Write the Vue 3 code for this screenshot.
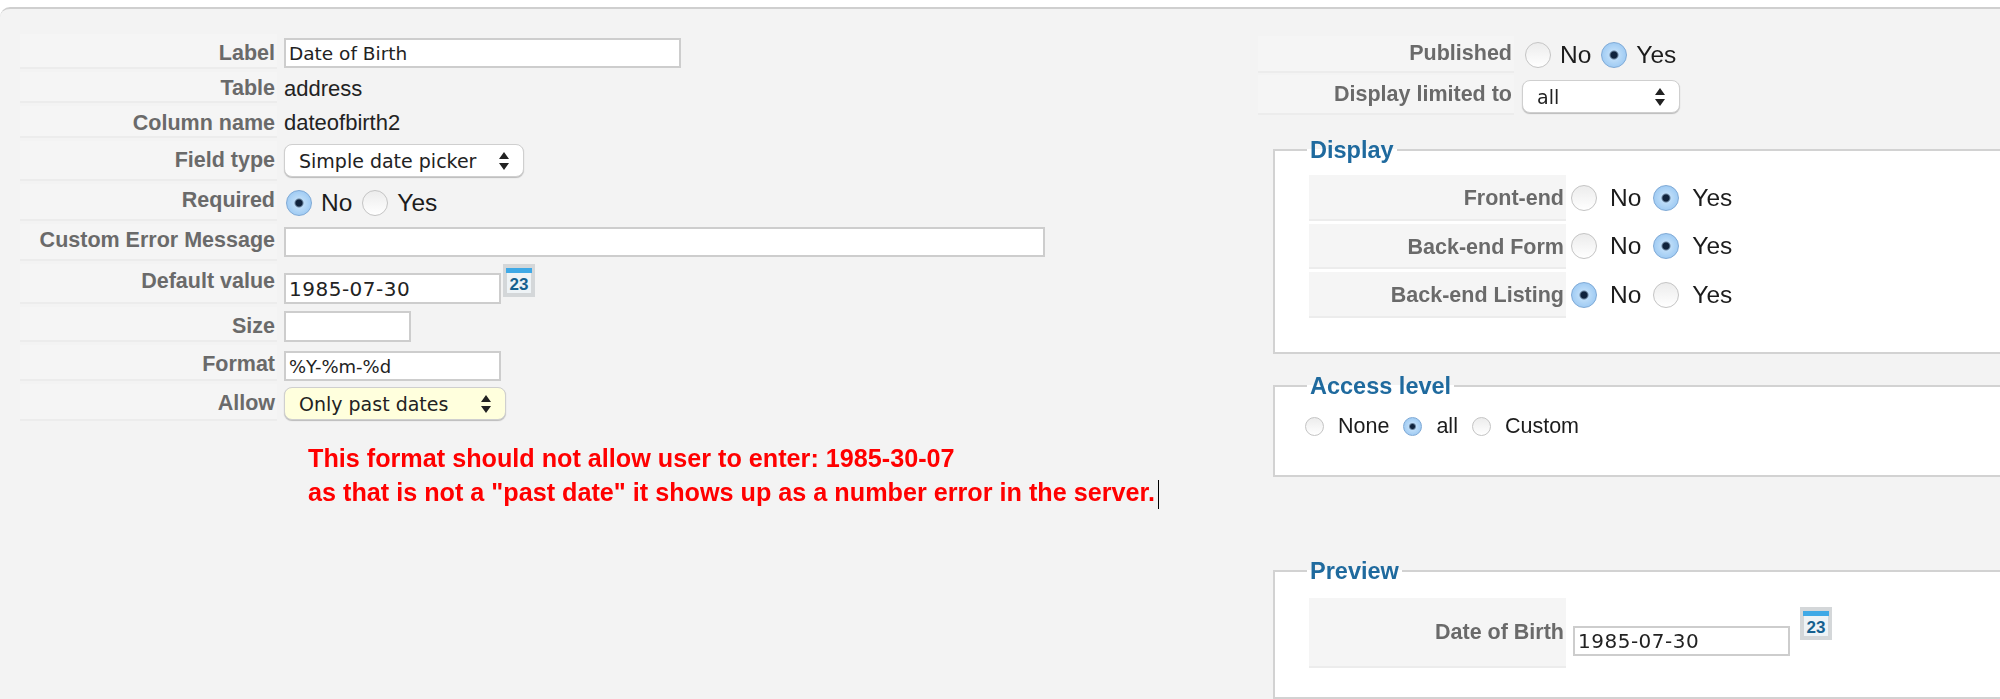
<script setup>
const cal = '23'
</script>

<template>
  <div class="page">
    <div class="card">
      <div class="col-left">
        <div class="row h35">
          <div class="lab pt7">Label</div>
          <input class="inp w397 first" value="Date of Birth" />
        </div>
        <div class="row h31">
          <div class="lab">Table</div>
          <div class="val">address</div>
        </div>
        <div class="row h32">
          <div class="lab pt5">Column name</div>
          <div class="val">dateofbirth2</div>
        </div>
        <div class="row h40">
          <div class="lab pt7">Field type</div>
          <div class="sel w240"><span>Simple date picker</span>
            <svg class="updown" width="12" height="20" viewBox="0 0 12 20"><path d="M6 1l5 7H1zM6 19l5-7H1z" fill="#222" /></svg>
          </div>
        </div>
        <div class="row h37">
          <div class="lab">Required</div>
          <div class="opts">
            <input type="radio" class="rad" name="req" checked /><span class="opt">No</span>
            <input type="radio" class="rad" name="req" /><span class="opt">Yes</span>
          </div>
        </div>
        <div class="row h37">
          <div class="lab">Custom Error Message</div>
          <input class="inp w761" />
        </div>
        <div class="row h40">
          <div class="lab pt5">Default value</div>
          <input class="inp w217 low date" value="1985-07-30" />
          <svg class="calendar" width="32" height="33" viewBox="0 0 32 33">
            <rect width="32" height="33" fill="#d4d7d9" />
            <rect x="4" y="4" width="24" height="25" fill="#eef3f6" />
            <rect x="3" y="4" width="26" height="5" fill="#3fa9e6" />
            <text x="16" y="26" text-anchor="middle" class="cal-num">{{ cal }}</text>
          </svg>
        </div>
        <div class="row h35">
          <div class="lab pt7">Size</div>
          <input class="inp w127 low" />
        </div>
        <div class="row h36">
          <div class="lab pt7">Format</div>
          <input class="inp w217 small" value="%Y-%m-%d" />
        </div>
        <div class="row h37">
          <div class="lab pt7">Allow</div>
          <div class="sel w222 yellow"><span>Only past dates</span>
            <svg class="updown" width="12" height="20" viewBox="0 0 12 20"><path d="M6 1l5 7H1zM6 19l5-7H1z" fill="#222" /></svg>
          </div>
        </div>
        <div class="note">
          This format should not allow user to enter: 1985-30-07<br />
          as that is not a "past date" it shows up as a number error in the server.<span class="caret"></span>
        </div>
      </div>

      <div class="col-right">
        <div class="row-r h37r">
          <div class="lab lab-r pt5">Published</div>
          <div class="opts top-opts">
            <input type="radio" class="rad" name="pub" /><span class="opt">No</span>
            <input type="radio" class="rad" name="pub" checked /><span class="opt">Yes</span>
          </div>
        </div>
        <div class="row-r h40r">
          <div class="lab lab-r pt7">Display limited to</div>
          <div class="sel w158 top-sel"><span>all</span>
            <svg class="updown" width="12" height="20" viewBox="0 0 12 20"><path d="M6 1l5 7H1zM6 19l5-7H1z" fill="#222" /></svg>
          </div>
        </div>

        <fieldset class="box box-display">
          <legend>Display</legend>
          <div class="frow">
            <div class="lab lab-f">Front-end</div>
            <div class="opts wide">
              <input type="radio" class="rad" name="fe" /><span class="opt">No</span>
              <input type="radio" class="rad" name="fe" checked /><span class="opt">Yes</span>
            </div>
          </div>
          <div class="frow">
            <div class="lab lab-f">Back-end Form</div>
            <div class="opts wide">
              <input type="radio" class="rad" name="bf" /><span class="opt">No</span>
              <input type="radio" class="rad" name="bf" checked /><span class="opt">Yes</span>
            </div>
          </div>
          <div class="frow">
            <div class="lab lab-f">Back-end Listing</div>
            <div class="opts wide">
              <input type="radio" class="rad" name="bl" checked /><span class="opt">No</span>
              <input type="radio" class="rad" name="bl" /><span class="opt">Yes</span>
            </div>
          </div>
        </fieldset>

        <fieldset class="box box-access">
          <legend>Access level</legend>
          <div class="opts access">
            <input type="radio" class="rad mini" name="al" /><span class="opt sm">None</span>
            <input type="radio" class="rad mini" name="al" checked /><span class="opt sm">all</span>
            <input type="radio" class="rad mini" name="al" /><span class="opt sm">Custom</span>
          </div>
        </fieldset>

        <fieldset class="box box-preview">
          <legend>Preview</legend>
          <div class="frow preview">
            <div class="lab lab-f">Date of Birth</div>
            <input class="inp w217 prev-inp date" value="1985-07-30" />
            <svg class="calendar prev-cal" width="32" height="33" viewBox="0 0 32 33">
              <rect width="32" height="33" fill="#d4d7d9" />
              <rect x="4" y="4" width="24" height="25" fill="#eef3f6" />
              <rect x="3" y="4" width="26" height="5" fill="#3fa9e6" />
              <text x="16" y="26" text-anchor="middle" class="cal-num">{{ cal }}</text>
            </svg>
          </div>
        </fieldset>
      </div>
    </div>
  </div>
</template>

<style>
html, body {
  margin: 0;
  background: #fff;
}
</style>

<style scoped>
.page {
  width: 2000px;
  height: 699px;
  overflow: hidden;
  padding-top: 7px;
  box-sizing: border-box;
  font-family: "Liberation Sans", Arial, sans-serif;
  font-size: 20px;
  filter: blur(0.6px);
}

.card {
  display: flex;
  height: 700px;
  background: #f3f3f3;
  border-top: 2px solid #cfcfcf;
  border-top-left-radius: 10px;
}

.col-left {
  width: 1258px;
  flex: none;
  padding: 25px 0 0 20px;
  box-sizing: border-box;
}

.col-right {
  flex: 1;
  min-width: 0;
  padding-top: 27px;
}

.row {
  display: flex;
  align-items: flex-start;
  margin-bottom: 3px;
}

.h31 { height: 31px; }
.h32 { height: 32px; }
.h35 { height: 35px; }
.h36 { height: 36px; }
.h37 { height: 37px; }
.h40 { height: 40px; }

.lab {
  width: 257px;
  height: 100%;
  flex: none;
  box-sizing: border-box;
  padding: 4px 2px 0 0;
  text-align: right;
  font-weight: bold;
  font-size: 21.5px;
  line-height: 24px;
  color: #6a6a6a;
  background: #f5f5f5;
  border-bottom: 2px solid #ececec;
}

.lab.pt5 { padding-top: 5px; }
.lab.pt7 { padding-top: 7px; }

.val {
  margin-left: 7px;
  padding-top: 5px;
  font-size: 22px;
  line-height: 24px;
  color: #222;
}

.inp {
  box-sizing: border-box;
  height: 30px;
  margin: 3px 0 0 7px;
  padding: 1px 3px;
  background: #fff;
  border: 2px solid #cdcdcd;
  border-radius: 0;
  outline: none;
  font-family: "DejaVu Sans", sans-serif;
  font-size: 18.5px;
  color: #222;
}

.first { margin-top: 4px; }
.w397 { width: 397px; }
.w761 { width: 761px; }
.w217 { width: 217px; }
.w127 { width: 127px; }
.low { margin-top: 9px; height: 31px; }
.row.h35 .low { margin-top: 4px; }
.small { font-size: 18px; margin-top: 6px; }
.date { font-size: 20px; letter-spacing: 0.5px; }

.sel {
  box-sizing: border-box;
  height: 33px;
  margin: 3px 0 0 7px;
  display: flex;
  align-items: center;
  justify-content: space-between;
  padding: 0 13px 0 14px;
  background: #fff;
  border: 1px solid #cfcfcf;
  border-radius: 8px;
  box-shadow: 0 1px 1px #bbb;
  font-family: "DejaVu Sans", sans-serif;
  font-size: 19px;
  color: #222;
}

.w240 { width: 240px; }
.w222 { width: 222px; }
.w158 { width: 158px; }
.yellow { background: #ffffdd; }

.top-sel { margin: 5px 0 0 8px; }

.opts {
  display: flex;
  align-items: center;
  margin-left: 9px;
  height: 37px;
}

.top-opts { margin-left: 11px; }

.rad {
  appearance: none;
  -webkit-appearance: none;
  flex: none;
  width: 26px;
  height: 26px;
  margin: 0 9px 0 0;
  border-radius: 50%;
  border: 1px solid #c4c4c4;
  background: linear-gradient(#ececec, #ffffff);
}

.rad:checked {
  border-color: #7ea9d6;
  background: radial-gradient(circle, #10233c 0 3px, #bcdcf8 5px, #8dc0f0 100%);
}

.opt {
  color: #1c1c1c;
  font-size: 24.5px;
  margin-right: 10px;
}

.wide .opt { margin-right: 12px; margin-left: 4px; }

.note {
  margin: 20px 0 0 288px;
  font-weight: bold;
  font-size: 25.2px;
  line-height: 34px;
  color: #ff0000;
}

.caret {
  display: inline-block;
  width: 1px;
  height: 29px;
  margin-left: 3px;
  vertical-align: middle;
  background: #000;
}

.calendar {
  flex: none;
  margin-left: 2px;
}

.cal-num {
  font-family: "Liberation Sans", sans-serif;
  font-weight: bold;
  font-size: 17px;
  fill: #15608f;
}

.row-r {
  display: flex;
  align-items: flex-start;
  margin-bottom: 2px;
}

.h37r { height: 37px; }
.h40r { height: 40px; }

.lab-r { width: 256px; }

.box {
  width: 860px;
  margin: 0 0 0 15px;
  padding: 0 0 0 34px;
  box-sizing: border-box;
  background: #fff;
  border: 2px solid #d2d2d2;
  border-right: none;
}

.box legend {
  margin-left: -2px;
  padding: 0 3px;
  font-weight: bold;
  font-size: 23.5px;
  line-height: 24px;
  color: #1f6a9e;
}

.box-display { height: 216px; margin-top: 23px; }
.box-access { height: 103px; margin-top: 20px; padding-left: 32px; }
.box-access legend { margin-left: 0; }
.box-preview { height: 140px; margin-top: 82px; }

.frow {
  display: flex;
  align-items: flex-start;
  height: 45.5px;
  margin: 3px 0 0 0;
}

.frow:first-of-type { margin-top: 13px; }

.lab.lab-f {
  margin-left: 0;
  width: 257px;
  padding-top: 11px;
}

.wide { margin-left: 5px; height: 45px; }
.access { margin: 14px 0 0 -2px; height: 28px; }

.mini {
  width: 19px;
  height: 19px;
  margin-right: 14px;
}

.mini:checked {
  background: radial-gradient(circle, #10233c 0 2px, #bcdcf8 4px, #8dc0f0 100%);
}

.opt.sm { font-size: 21.5px; margin-right: 14px; }

.frow.preview { height: 70px; margin-top: 15px; }
.preview .lab.lab-f { padding-top: 22px; }
.prev-inp { margin: 28px 0 0 7px; height: 30px; }
.prev-cal { margin: 9px 0 0 10px; }
</style>
